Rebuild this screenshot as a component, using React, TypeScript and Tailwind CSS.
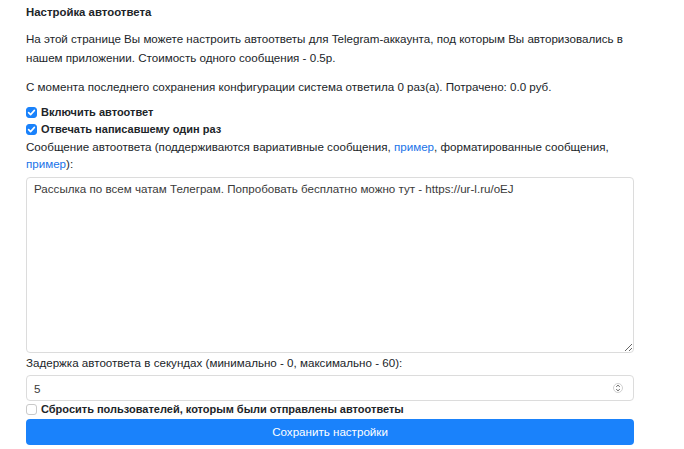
import { useState } from "react";

const FONT = '"Liberation Sans", Arial, sans-serif';

function Check({
  checked,
  onChange,
  label,
}: {
  checked: boolean;
  onChange: (v: boolean) => void;
  label: string;
}) {
  return (
    <label className="flex items-center gap-[4px] font-bold text-[11px] leading-[17px] cursor-pointer">
      <span className="relative w-[11px] h-[11px] shrink-0">
        <input
          type="checkbox"
          checked={checked}
          onChange={(e) => onChange(e.target.checked)}
          className="appearance-none block w-[11px] h-[11px] m-0 rounded-[3px] border border-[#c9c9c9] bg-white checked:bg-[#1a82fb] checked:border-[#1a82fb]"
        />
        {checked && (
          <svg viewBox="0 0 11 11" className="absolute inset-0 w-[11px] h-[11px] pointer-events-none">
            <path d="M2.6 5.6 L4.6 7.6 L8.4 3.4" fill="none" stroke="white" strokeWidth="1.6" strokeLinecap="round" strokeLinejoin="round" />
          </svg>
        )}
      </span>
      {label}
    </label>
  );
}

export default function App() {
  const [enabled, setEnabled] = useState(true);
  const [once, setOnce] = useState(true);
  const [reset, setReset] = useState(false);
  const [delay, setDelay] = useState("5");
  const [text, setText] = useState(
    "Рассылка по всем чатам Телеграм. Попробовать бесплатно можно тут - https://ur-l.ru/oEJ"
  );

  return (
    <div
      className="w-[684px] h-[449px] bg-white text-[#212529] text-[11.6px] leading-[19px] px-[26px] pt-[3px]"
      style={{ fontFamily: FONT }}
    >
      <div className="w-[608px]">
        <h4 className="font-bold text-[11.4px] leading-[18px]">Настройка автоответа</h4>

        <p className="mt-[7.5px]">
          На этой странице Вы можете настроить автоответы для Telegram-аккаунта, под которым Вы авторизовались в
          нашем приложении. Стоимость одного сообщения - 0.5р.
        </p>

        <p className="mt-[10px]">
          С момента последнего сохранения конфигурации система ответила 0 раз(а). Потрачено: 0.0 руб.
        </p>

        {/* Checkboxes */}
        <div className="mt-[8px]">
          <Check checked={enabled} onChange={setEnabled} label="Включить автоответ" />
          <Check checked={once} onChange={setOnce} label="Отвечать написавшему один раз" />
        </div>

        <div className="leading-[17px]">
          Сообщение автоответа (поддерживаются вариативные сообщения,{" "}
          <a href="#" className="text-[#1a73e8]">пример</a>, форматированные сообщения,{" "}
          <a href="#" className="text-[#1a73e8]">пример</a>):
        </div>

        <textarea
          value={text}
          onChange={(e) => setText(e.target.value)}
          className="mt-[5.5px] block w-full h-[176px] border border-[#dcdcdc] rounded-[4px] px-[7px] py-[1px] text-[11.6px] leading-[19px] text-[#3a3a3a] outline-none resize-y"
          style={{ fontFamily: FONT }}
        />

        <div className="leading-[20px]">Задержка автоответа в секундах (минимально - 0, максимально - 60):</div>

        <div className="mt-[2px] flex items-center h-[26px] border border-[#dcdcdc] rounded-[4px] px-[7px]">
          <input
            type="text"
            value={delay}
            onChange={(e) => setDelay(e.target.value)}
            className="flex-1 outline-none text-[11.6px] text-[#3a3a3a]"
            style={{ fontFamily: FONT }}
          />
          <svg width="10" height="14" viewBox="0 0 10 14" className="mr-[3px]">
            <circle cx="5" cy="7" r="4.5" fill="none" stroke="#d0d0d0" />
            <path d="M3.2 5.8 L5 4.2 L6.8 5.8" fill="none" stroke="#555" strokeWidth="0.9" />
            <path d="M3.2 8.2 L5 9.8 L6.8 8.2" fill="none" stroke="#555" strokeWidth="0.9" />
          </svg>
        </div>

        <Check checked={reset} onChange={setReset} label="Сбросить пользователей, которым были отправлены автоответы" />

        <button className="mt-[0.5px] w-full h-[26px] rounded-[4px] bg-[#1a82fb] text-white text-[11.6px]">
          Сохранить настройки
        </button>
      </div>
    </div>
  );
}
